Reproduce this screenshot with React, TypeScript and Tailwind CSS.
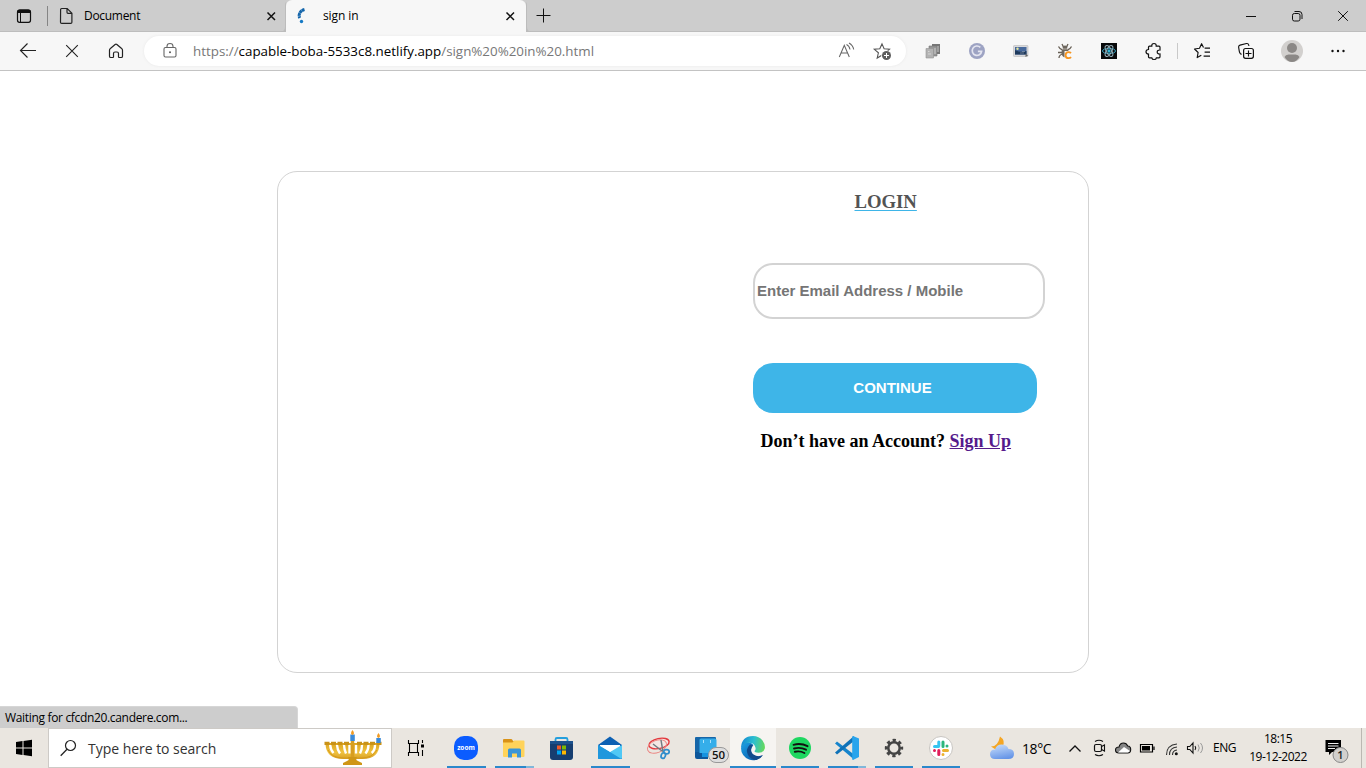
import type { ReactNode } from "react";

type ArtProps = { x: number; y: number; w: number; h: number; children: ReactNode; label?: string };

/* Drawing area whose viewBox shares the window's coordinate system. */
function Art({ x, y, w, h, children, label }: ArtProps) {
  return (
    <svg width={w} height={h} viewBox={`${x} ${y} ${w} ${h}`} fill="none" className="block shrink-0" aria-label={label}>
      {children}
    </svg>
  );
}

function TabStrip() {
  return (
    <div className="flex h-8 shrink-0 bg-[#cdcdcd] text-[12px] text-black shadow-[inset_0_-1px_0_#bdbdbd]">
      <Art x={0} y={0} w={84} h={32}>
        <rect x="17.500" y="10" width="13" height="12.300" rx="2" stroke="#111" strokeWidth="1.200" />
        <path d="M17 12.500a3 3 0 0 1 3-3h8a3 3 0 0 1 3 3V13H17z" fill="#111" />
        <path d="M20.500 13v9" stroke="#111" />
        <path d="M47.500 6v20" stroke="#858585" />
        <path d="M60.600 9.500q0-1 1-1h5.600l4.700 4.700v9q0 1.200-1.200 1.200h-9q-1.200 0-1.200-1.200zM67 8.700v3.600q0 1 1 1h3.800" stroke="#222" strokeWidth="1.200" />
      </Art>
      <div className="flex w-[175px] items-center leading-4">
        <span className="tracking-[-0.3px]">Document</span>
      </div>
      <Art x={259} y={0} w={27} h={32}>
        <path d="m267.500 12.500 7.500 7.500m0-7.500-7.500 7.500" stroke="#111" strokeWidth="1.500" />
        <path d="M286 4v28h-5q4-1 4-5V5q0-2 1-3z" fill="#bcbcbc" />
      </Art>
      <div className="flex w-60 items-center rounded-t-[6px] bg-[#f7f7f7]">
        <Art x={286} y={0} w={37} h={32}>
          <path d="M304.500 9.500q-3.700 1-4.900 4-1 2.600.2 4.500" stroke="#1365ab" strokeWidth="3" strokeDasharray="2.800 .3" />
          <circle cx="301.500" cy="21.500" r="1.700" fill="#1479c4" />
        </Art>
        <span className="w-[177px] leading-4 tracking-[-0.1px]">sign in</span>
        <Art x={500} y={0} w={26} h={32}>
          <path d="m506.500 12.500 7.500 7.500m0-7.500-7.500 7.500" stroke="#111" strokeWidth="1.500" />
        </Art>
      </div>
      <Art x={526} y={0} w={34} h={32}>
        <path d="M526 4v28h5q-4-1-4-5V5q0-2-1-3z" fill="#bcbcbc" />
        <path d="M536.500 15.500h14M543.500 8.500v14" stroke="#111" />
      </Art>
      <div className="flex-1" />
      <Art x={1230} y={0} w={136} h={32}>
        <path d="M1246 16.500h10" stroke="#111" />
        <rect x="1292.500" y="13.500" width="7.500" height="7.500" rx="1.800" stroke="#111" />
        <path d="M1294.500 11.500h4.500q3 0 3 3v4.500" stroke="#111" />
        <path d="m1338.200 11.200 9.600 9.600m0-9.600-9.600 9.600" stroke="#111" />
      </Art>
    </div>
  );
}

function Toolbar() {
  return (
    <div className="flex h-[39px] shrink-0 border-b border-[#c3c3c3] bg-[#f7f7f7]">
      <Art x={0} y={32} w={144} h={38}>
        <path d="M36 50.500H20.500m7-7-7 7 7 7" stroke="#222" strokeWidth="1.150" />
        <path d="m66.200 45.200 11.600 11.600m0-11.600-11.600 11.600" stroke="#222" strokeWidth="1.100" />
        <path d="M109.500 50.300q0-1.100.9-1.800l4.700-4q.9-.8 1.800 0l4.700 4q.9.700.9 1.800v5.900q0 1.300-1.300 1.300h-2.100q-.6 0-.6-.7v-3.300q0-1.500-1.500-1.500h-2q-1.500 0-1.500 1.500v3.300q0 .7-.6.700h-2.100q-1.300 0-1.300-1.300z" stroke="#222" strokeWidth="1.200" />
      </Art>
      <div className="mt-1 flex h-[30px] w-[762px] rounded-full bg-white shadow-[0_0_3px_#e8e8e8]">
        <Art x={144} y={36} w={49} h={30}>
          <rect x="164" y="47.500" width="12" height="9.500" rx="1.500" stroke="#666" strokeWidth="1.100" />
          <path d="M167 47.500v-1.200q0-2.800 3-2.800t3 2.800v1.200" stroke="#666" strokeWidth="1.100" />
          <circle cx="170" cy="52.300" r="1" fill="#555" />
        </Art>
        <div className="flex w-[637px] items-center whitespace-nowrap text-[13.360px] leading-5 text-[#777]">
          <span>https://<span className="text-black">capable-boba-5533c8.netlify.app</span>/sign%20%20in%20.html</span>
        </div>
        <Art x={830} y={36} w={76} h={30}>
          <path d="m839.300 57 5-11.700 5 11.700m-8.300-4h6.600M846.500 44.500q3 1.500 3.500 5M849 43q4 2.200 4.700 6.500" stroke="#666" strokeWidth="1.050" />
          <path d="m882 43.900 2.100 4.900 5.400.5-4 3.500 1.100 5.200-4.700-2.800-4.700 2.800 1.200-5.200-4.100-3.500 5.500-.5z" stroke="#555" strokeWidth="1.100" />
          <circle cx="886.500" cy="55.500" r="5.200" fill="#fff" />
          <circle cx="886.500" cy="55.500" r="4.500" fill="#5c5c5c" />
          <path d="M884 55.500h5m-2.500-2.500v5" stroke="#fff" />
        </Art>
      </div>
      <div className="flex flex-1">
        <Art x={906} y={32} w={460} h={38}>
          <path d="M932 44h8v10h-8z" fill="#777" />
          <path d="M929 46h8v10h-8z" fill="#969696" stroke="#777" strokeWidth=".6" />
          <path d="M926 48.500h7.500V58H926z" fill="#b3b3b3" stroke="#939393" strokeWidth=".6" />
          <path d="M928 51.500h1.500M928 54h3M938 46v6M935 48v6" stroke="#ddd" strokeWidth=".8" />
          <circle cx="977" cy="51" r="8" fill="#9da3c3" />
          <path d="M980.300 47.400a4.700 4.700 0 1 0 1.300 3.900h-3.700" stroke="#e4e5f0" strokeWidth="1.700" />
          <rect x="1013.500" y="45.500" width="14.500" height="11" rx=".7" fill="#d9d9dc" stroke="#bbb" strokeWidth=".6" />
          <path d="M1015 47h11.500v7.500h-11.500z" fill="#47699c" />
          <path d="M1015 50q5 3 11.500 1v3.500h-11.500z" fill="#1e3a5c" />
          <circle cx="1017.500" cy="48.700" r="1.200" fill="#e6e69b" />
          <path d="M1022 51.500h3M1020 53h4" stroke="#9ba6b8" strokeWidth=".6" />
          <path d="m1025.500 53.500 2.500 2-2.500 1.500z" fill="#666" />
          <path d="m1062 44 1.500 3m4.500-3-1.500 3M1058.500 46.500q1.500 3 4 3.500m9-3.500q-1.500 3-4 3.500M1058 52.500h5m4 0h5.500m-13.500 5.500q0-3 3.500-4" stroke="#675f55" strokeWidth="1.300" />
          <ellipse cx="1065" cy="52.500" rx="3.500" ry="5" fill="#6d675f" />
          <ellipse cx="1065" cy="47" rx="2.500" ry="1.500" fill="#6d675f" />
          <path d="M1062 49h6" stroke="#d3cbc1" strokeWidth=".7" />
          <path d="M1064.500 51h8.500v8h-8.500z" fill="#f7f7f7" />
          <path d="M1071 53.200q-1-1-2.400-1-3 0-3 3t3 3q1.500 0 2.500-1" stroke="#f79620" strokeWidth="1.800" />
          <rect x="1101" y="43" width="16" height="16" fill="#080a0b" />
          <g stroke="#96aeb8" strokeWidth="1"><ellipse cx="1109" cy="51" rx="6.500" ry="2.700" stroke="#329cb9" /><ellipse cx="1109" cy="51" rx="6" ry="2.600" transform="rotate(60 1109 51)" /><ellipse cx="1109" cy="51" rx="6" ry="2.600" transform="rotate(-60 1109 51)" /></g>
          <circle cx="1109" cy="51" r="1.700" fill="#31b5d6" />
          <path d="M1149.500 46.200h2.300q-.2-2.700 2.200-2.700t2.200 2.700h2.800q1 0 1 1v2.800q-2.800-.2-2.800 2t2.800 2v2.800q0 1-1 1h-2.600q-.3 1.700-2.300 1.700t-2.300-1.700h-2.300q-1 0-1-1v-2.700q-2.500-.2-2.500-2.300t2.500-2.300v-2.300q0-1 1-1z" stroke="#111" strokeWidth="1.200" />
          <path d="M1177.500 43v16" stroke="#c9c9c9" />
          <path d="m1203.500 47.500-1.900-3.800-2.100 4.500-5 .8 3.600 3.500-.9 5.100 4.100-2.400m3.300-7h5.400m-5.400 4h5.400m-6.400 4h6.400" stroke="#111" strokeWidth="1.150" strokeLinejoin="round" />
          <rect x="1243.600" y="48.500" width="9.800" height="9.800" rx="2" stroke="#111" strokeWidth="1.200" />
          <path d="M1248.500 50.500v6m-3-3h6M1241.500 54.500l-1.200-1q-1-1-1-2.200l-.7-4.300q-.1-1.500 1.400-1.900l6.500-1.600q1.800-.3 2.200 1.500l.2 1" stroke="#111" strokeWidth="1.150" />
          <circle cx="1292" cy="51" r="11" fill="#d2d0ce" />
          <circle cx="1292" cy="48" r="5" fill="#8b8886" />
          <path d="M1284.500 57q1-2.500 4-2.500h7q3 0 4 2.500-3 5-7.500 5t-7.500-5z" fill="#8b8886" />
          <circle cx="1332.500" cy="51" r="1.200" fill="#111" /><circle cx="1338" cy="51" r="1.200" fill="#111" /><circle cx="1343.500" cy="51" r="1.200" fill="#111" />
        </Art>
      </div>
    </div>
  );
}

function LoginPage() {
  return (
    <main className="flex min-h-0 flex-1 flex-col justify-between bg-white">
      <section className="mx-auto mt-[100px] flex h-[502px] w-[812px] shrink-0 flex-col items-start rounded-[20px] border border-[#d3d3d3] pl-[475px] font-['Liberation_Serif',serif] font-bold">
        <h1 className="ml-[101.500px] mt-[19px] text-[18.720px] leading-[22px] text-[#535353] underline decoration-[#3eb5e8] decoration-1 underline-offset-2">LOGIN</h1>
        <input
          aria-label="Email or mobile"
          placeholder="Enter Email Address / Mobile"
          className="mt-[50px] h-14 w-[292px] rounded-[20px] border-2 border-[#d3d3d3] px-[2px] pb-[2px] font-['Liberation_Sans',sans-serif] text-[15px] placeholder:text-[#757575] placeholder:opacity-100"
        />
        <button className="mt-11 h-[50px] w-[284px] rounded-[20px] bg-[#3eb5e8] pr-[5px] font-['Liberation_Sans',sans-serif] text-[15px] text-white">CONTINUE</button>
        <p className="ml-[7.500px] mt-[16px] whitespace-nowrap text-[18px] leading-6 text-black">
          Don’t have an Account? <a className="text-[#551a8b] underline" href="#signup">Sign Up</a>
        </p>
      </section>
      <div className="h-[22px] w-[298px] rounded-tr-[4px] border-r border-t border-[#d6d6d6] bg-[#cdcdcd] pl-[5px] text-[12px] leading-[22px] tracking-[-0.330px] text-black">
        Waiting for cfcdn20.candere.com...
      </div>
    </main>
  );
}

function Underline({ x, w = 39 }: { x: number; w?: number }) {
  return <rect x={x} y={766} width={w} height={2} fill="#2b88cb" />;
}

function Taskbar() {
  return (
    <footer className="flex h-10 shrink-0 bg-[#eae6e0] text-black">
      <Art x={0} y={728} w={48} h={40} label="Start">
        <path d="m16 742 6.500-.9v6.400H16zm7.500-1 8.500-1.200v7.700h-8.500zM16 748.500h6.500v6.400l-6.500-.9zm7.500 0h8.500v7.700l-8.500-1.200z" fill="#000" />
      </Art>
      <div className="flex w-[344px] border border-[#cdcac6] bg-white">
        <Art x={49} y={729} w={39} h={38}>
          <circle cx="70.500" cy="745.500" r="5" stroke="#222" strokeWidth="1.200" />
          <path d="m67 749.300-6.300 6.400" stroke="#222" strokeWidth="1.300" />
        </Art>
        <span className="w-[232px] text-[14px] leading-[39px] tracking-[-0.030px] text-[#333]">Type here to search</span>
        <Art x={320} y={729} w={71} h={38}>
          <defs><linearGradient id="brass" x1="352" y1="742" x2="352" y2="765" gradientUnits="userSpaceOnUse"><stop stopColor="#d9a11c" /><stop offset=".45" stopColor="#f0c23f" /><stop offset="1" stopColor="#c08010" /></linearGradient></defs>
          <path d="M325.500 743q0 16 18 16h19q17 0 17-16z" fill="url(#brass)" />
          <path d="M330.200 745q.3 5 3.300 8M337 745q.3 5 3 8.500M344 745q.3 5 2 8.500M349.500 745v8.500M356 745v8.500M362 745q0 5-2 8.500M368.500 745q0 5-3 8.500M375 745q0 5-3.300 8" stroke="#fff" strokeWidth="2.400" />
          <path d="M328 750q4 8 15 8h19q10 0 15-8" stroke="#d6991a" strokeWidth="1" />
          <path d="M324.500 743.300h5m1.500 0h5m1.500 0h5m1.500 0h5m8 0h5m1.500 0h5m1.500 0h5m1.500 0h5" stroke="#c99218" strokeWidth="3.200" />
          <path d="M352.500 741v20" stroke="#d89d1f" strokeWidth="3.500" />
          <path d="M348 757h9q-2 3 1 4l4 2v2h-19v-2l4-2q3-1 1-4z" fill="#cf9616" />
          <path d="M350.300 734.500h4.500v6.500h-4.500zm26 3.500h4.500v5h-4.500z" fill="#3b8bd9" />
          <path d="M352.500 730q-3 4 0 5 3-1 0-5zm26 3q-3 4 0 5 3-1 0-5z" fill="#f29b23" />
        </Art>
      </div>
      <Art x={392} y={728} w={50} h={40} label="Task view">
        <path d="M408.500 740v3.500h10V740M408.500 756v-3.500h10v3.500M409.500 743.500v9m8-9v9M422.500 740v3m0 7v6" stroke="#000" strokeWidth="1.100" />
        <path d="M421 744.500h3v3h-3z" fill="#000" />
      </Art>
      <Art x={442} y={728} w={96} h={40}>
        <rect x="454" y="736" width="24" height="24" rx="10" fill="#0b5cff" />
        <text x="466" y="750" textAnchor="middle" fill="white" fontSize="6.500" fontWeight="700" fontFamily="Open Sans, sans-serif">zoom</text>
        <Underline x={447} />
        <path d="M503 740q0-1 1-1h7q1 0 1.500 1l.5 1h9v5h-19z" fill="#d99217" />
        <path d="M503 742.500h9.500l1.500-2h9.500q1 0 1 1v14.500q0 1-1 1h-19.500q-1 0-1-1z" fill="#ffd35a" />
        <path d="M508 757.500v-7.500q0-1.500 1.500-1.500h10q1.500 0 1.500 1.500v7.500h-4v-4h-5v4z" fill="#3a95d6" />
        <Underline x={495} w={31} /><path d="M526 766h8v2h-8z" fill="#80b7da" />
      </Art>
      <Art x={538} y={728} w={96} h={40}>
        <path d="M555.500 742v-2.500q0-1.500 1.500-1.500h9q1.500 0 1.500 1.500v2.500" stroke="#249fdd" strokeWidth="1.800" />
        <path d="M550 741h23v16q0 3-3 3h-17q-3 0-3-3z" fill="#173e70" />
        <path d="M550 741h23v3h-23z" fill="#1c518c" />
        <path d="M557 745.500h4v4h-4z" fill="#f05a29" /><path d="M562 745.500h4v4h-4z" fill="#7fba00" /><path d="M557 750.500h4v4h-4z" fill="#00a4ef" /><path d="M562 750.500h4v4h-4z" fill="#ffb900" />
        <path d="m598 745 12-8.500 12 8.500v14h-24z" fill="#0c60b3" />
        <path d="M600 745h20v7h-20z" fill="#f5f5f5" />
        <path d="m598 745 12 7 12-7v13q0 1-1 1h-22q-1 0-1-1z" fill="#50c8f5" />
        <path d="m598 745 12 7 11.500 7H599q-1 0-1-1z" fill="#1f97dd" /><path d="m599.500 745 10.500 6.800 10.500-6.800z" fill="#fff" />
        <Underline x={591} />
      </Art>
      <Art x={634} y={728} w={96} h={40}>
        <ellipse cx="659" cy="743.500" rx="10.300" ry="5" transform="rotate(-12 659 743.500)" fill="#f4e7e3" stroke="#e3393e" strokeWidth="1.400" />
        <ellipse cx="657" cy="746.500" rx="10" ry="6" transform="rotate(-22 657 746.500)" stroke="#eb8582" strokeWidth=".9" />
        <path d="m653 744 9 7m-1-11 2 12" stroke="#737b82" strokeWidth="1.500" />
        <ellipse cx="663.300" cy="755.500" rx="2.100" ry="3" transform="rotate(20 663.300 755.500)" stroke="#2f8dcc" strokeWidth="1.700" /><ellipse cx="666.500" cy="751.700" rx="2.700" ry="2.100" stroke="#2f8dcc" strokeWidth="1.700" />
        <rect x="695" y="737" width="21" height="20" rx="1" fill="#1666a8" />
        <path d="M695 752h13v7h-11q-2 0-2-2z" fill="#0d579b" />
        <path d="M699.500 740q0-1.500 1.500-1.500h14q1.500 0 1.500 1.500v13h-17z" fill="#35aeea" />
        <path d="M703.500 740v3m7-3v3" stroke="#b8e8ff" strokeWidth=".9" />
        <path d="M702 753h13q0 4-3 4h-10z" fill="#1592df" />
        <rect x="708.500" y="747.500" width="20" height="15" rx="7.500" fill="#dedede" stroke="#999" />
        <text x="718.500" y="759" textAnchor="middle" fill="#111" fontSize="11.500" fontWeight="600" fontFamily="Open Sans, sans-serif">50</text>
      </Art>
      <Art x={730} y={728} w={46} h={40} label="Edge">
        <defs>
          <linearGradient id="edge-green" x1="742" y1="741" x2="765" y2="745" gradientUnits="userSpaceOnUse"><stop stopColor="#168cd2" /><stop offset=".5" stopColor="#2cbfd0" /><stop offset="1" stopColor="#66d95a" /></linearGradient>
          <linearGradient id="edge-blue" x1="742" y1="744" x2="756" y2="760" gradientUnits="userSpaceOnUse"><stop stopColor="#1b9ce0" /><stop offset="1" stopColor="#0a5cac" /></linearGradient>
        </defs>
        <path d="M730 728h46v40h-46z" fill="#f6f4f1" />
        <path d="M741 748a12 12 0 0 0 21.500 7.500q-5 2-9-.5-3.500-3-2-7.500 1-2 2-2.500-3-3.500-7-2.500t-5.500 5.500z" fill="url(#edge-blue)" />
        <path d="M750 744.500q-5 5-2 10.500 3 5 8.500 5 4.500-1.500 6.500-5-5 2.500-9.500-.4-3.500-2.800-2-6.600.5-1.500 1.500-2.500-1-1.500-3-1z" fill="#114a8b" />
        <path d="M741 748q.5-12 12-12 6 0 9.500 4.500 3 4 2.300 8-1.300 4.300-6.300 4.300-4 0-4-1.700 1.500-1.300 1-3.300-1-4.800-6-5-5.500 0-8.500 5.200z" fill="url(#edge-green)" />
        <Underline x={730} w={46} />
      </Art>
      <Art x={776} y={728} w={188} h={40}>
        <circle cx="800" cy="748" r="11" fill="#1ed760" />
        <path d="M793.500 744.800q7.500-2 14 1.400M794 748.500q6.500-1.600 12 1.200M794.800 751.800q5.200-1.200 9.600 1.200" stroke="#111" strokeWidth="1.900" strokeLinecap="round" />
        <Underline x={781} w={38} />
        <path d="m835 743.500 2-2 17 13v5z" fill="#1684cc" />
        <path d="m835 752.500 2 2 17-13.500v-5z" fill="#0f72b8" />
        <path d="m853 736 6 2.500v18.500l-6 3q-.8 0-.8-1v-22q0-1 .8-1z" fill="#29a4ec" />
        <Underline x={828} w={30} /><path d="M858 766h8v2h-8z" fill="#80b7da" />
        <circle cx="891.500" cy="748" r="0" fill="#444" />
        <circle cx="894" cy="748" r="5.700" stroke="#444" strokeWidth="2.500" />
        <circle cx="894" cy="748" r="7.700" stroke="#444" strokeWidth="3" strokeDasharray="3.200 2.848" strokeDashoffset="1.600" />
        <Underline x={875} w={38} />
        <circle cx="941" cy="748" r="11.500" fill="#fff" stroke="#c8c5c1" />
        <g strokeWidth="3" strokeLinecap="round"><path d="M938.800 742v4M934.500 746.500h4" stroke="#36c5f0" /><path d="M943 742v4.500m4-.5h0" stroke="#2eb67d" /><path d="M943.500 750.500h4M943 754.500h0" stroke="#ecb22e" /><path d="M938.800 750.500v4m-4.300-4h0" stroke="#e01e5a" /></g>
        <Underline x={922} w={38} />
      </Art>
      <div className="flex flex-1">
        <Art x={964} y={728} w={58} h={40} label="Weather">
          <defs><linearGradient id="weather-cloud" x1="1000" y1="744" x2="1003" y2="759" gradientUnits="userSpaceOnUse"><stop stopColor="#c3dafa" /><stop offset="1" stopColor="#6695e7" /></linearGradient></defs>
          <path d="M1000 736.500q6 4 2.500 10.500-5 5-11.500-.5 7 0 9-10z" fill="#f5a623" />
          <path d="M995 759q-5 0-5-4.700t5-4.800q1.500-5 6.500-5 5.500 0 7 4.500 5.500 0 5.500 5t-5.500 5z" fill="url(#weather-cloud)" />
        </Art>
        <span className="w-[41px] whitespace-nowrap text-[14px] leading-[41px] tracking-[-0.400px]">18°C</span>
        <Art x={1063} y={728} w={150} h={40}>
          <path d="m1069.500 751.500 5.500-5.500 5.500 5.500" stroke="#111" strokeWidth="1.300" />
          <path d="M1095 741.500q4-2.500 8 0M1095 754.500q4 2.500 8 0M1101.500 746.500l3-1.500v6l-3-1.500" stroke="#111" strokeWidth="1.100" />
          <rect x="1094.500" y="744.500" width="7" height="7" rx="1.500" stroke="#111" strokeWidth="1.200" />
          <path d="M1119 753q-3.500 0-3.500-3t3.500-3q1-4 4.500-4 3 0 4.200 3 3 .2 3 3.500t-3 3.500z" fill="#858585" stroke="#111" strokeWidth="1.100" />
          <path d="m1118 752.500 6-5.500 6 4-2 1.500z" fill="#fff" />
          <path d="M1140.500 744.500h12v7.500h-12zM1154 746.500v3.500" stroke="#000" strokeWidth="1.200" />
          <path d="M1142 746h8v4.500h-8z" fill="#000" />
          <path d="M1166.500 755q0-10 10.500-11M1169.500 755q0-7.500 7.500-8M1172.500 755q0-4.500 4.500-5" stroke="#333" strokeWidth="1.100" />
          <circle cx="1176.300" cy="753.700" r="1.500" fill="#111" />
          <path d="M1187.500 746.500h2.300l3.200-3.500v10l-3.200-3.500h-2.300zM1195 746q1.500 2 0 4" stroke="#111" strokeWidth="1.100" />
          <path d="M1198 744.500q2.500 3.500 0 7M1200.500 743q4 5 0 10" stroke="#999" />
        </Art>
        <span className="w-[36px] text-[12px] leading-10 tracking-[-0.450px]">ENG</span>
        <div className="flex w-[58px] flex-col items-center pt-[2px] text-[12px] leading-[18px] tracking-[-0.500px]">
          <span>18:15</span>
          <span className="whitespace-nowrap">19-12-2022</span>
        </div>
        <Art x={1307} y={728} w={59} h={40} label="Notifications">
          <path d="M1325.500 740h15.500v12h-9l-3 3v-3h-3.500z" fill="#000" />
          <path d="M1328 743.500h10.500M1328 746h10.500M1328 748.500h7" stroke="#eee" />
          <circle cx="1340.500" cy="755" r="7.500" fill="#d2d0cd" stroke="#888" />
          <text x="1340.500" y="759" textAnchor="middle" fill="#222" fontSize="11" fontWeight="600" fontFamily="Open Sans, sans-serif">1</text>
          <path d="M1361.500 728v40" stroke="#bbb8b2" />
        </Art>
      </div>
    </footer>
  );
}

export default function App() {
  return (
    <div className="flex h-[768px] w-[1366px] flex-col overflow-hidden bg-white font-['Open_Sans','Noto_Sans',sans-serif]">
      <TabStrip />
      <Toolbar />
      <LoginPage />
      <Taskbar />
    </div>
  );
}
